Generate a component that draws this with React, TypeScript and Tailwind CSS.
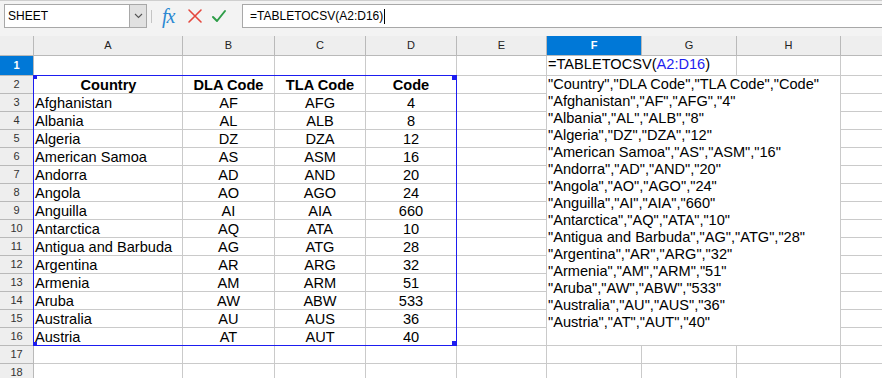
import React from "react";

const data: string[][] = [
  ["Afghanistan", "AF", "AFG", "4"],
  ["Albania", "AL", "ALB", "8"],
  ["Algeria", "DZ", "DZA", "12"],
  ["American Samoa", "AS", "ASM", "16"],
  ["Andorra", "AD", "AND", "20"],
  ["Angola", "AO", "AGO", "24"],
  ["Anguilla", "AI", "AIA", "660"],
  ["Antarctica", "AQ", "ATA", "10"],
  ["Antigua and Barbuda", "AG", "ATG", "28"],
  ["Argentina", "AR", "ARG", "32"],
  ["Armenia", "AM", "ARM", "51"],
  ["Aruba", "AW", "ABW", "533"],
  ["Australia", "AU", "AUS", "36"],
  ["Austria", "AT", "AUT", "40"],
];

const header = ["Country", "DLA Code", "TLA Code", "Code"];
// last column is scrolled mostly out of view, its letter isn't visible
const columns = ["A", "B", "C", "D", "E", "F", "G", "H", ""];

const csvLines = [header, ...data].map((r) =>
  r.map((v) => `"${v}"`).join(","),
);

const cell = "border-r border-b border-[#cacaca] leading-[18px] whitespace-nowrap";
const rowHead =
  "border-r border-b border-[#b9b9b9] bg-[#eeeeee] text-[11px] text-[#333] flex items-center justify-center";

function Toolbar() {
  return (
    <div className="h-[36px] bg-[#f3f3f3] border-t border-[#cfcfcf] flex items-start pt-[3px] pl-[4px] overflow-hidden">
      <div className="w-[143px] h-[24px] border border-[#a8a8a8] bg-white flex shrink-0">
        <span className="pl-[3px] text-[12px] leading-[22px] text-black">SHEET</span>
        <div className="ml-auto w-[17px] h-full bg-[#e1e1e1] border-l border-[#a8a8a8] flex items-center justify-center">
          <svg width="9" height="6" viewBox="0 0 9 6">
            <path d="M1 1 L4.5 4.5 L8 1" fill="none" stroke="#555" strokeWidth="1.1" />
          </svg>
        </div>
      </div>
      <div className="ml-[4px] mt-[6px] w-px h-[13px] bg-[#c4c4c4] shrink-0" />
      <div className="ml-[10px] mt-[1px] w-[17px] h-[22px] shrink-0 font-['Liberation_Serif',serif] italic text-[20px] leading-[22px] text-[#2a88d2] tracking-[-1px]">
        fx
      </div>
      <svg className="ml-[8px] mt-[4px] shrink-0" width="16" height="16" viewBox="0 0 16 16">
        <path d="M2 2 L14 14 M14 2 L2 14" stroke="#e5473d" strokeWidth="1.6" strokeLinecap="round" />
      </svg>
      <svg className="ml-[8px] mt-[4px] shrink-0" width="16" height="16" viewBox="0 0 16 16">
        <path d="M2 9 L6 13 L14 3" fill="none" stroke="#2e9d48" strokeWidth="2" strokeLinecap="round" strokeLinejoin="round" />
      </svg>
      <div className="ml-[15px] w-[660px] h-[24px] border border-[#a8a8a8] bg-white shrink-0 flex items-center pl-[7px]">
        <span className="text-[12px] text-black leading-[22px]">=TABLETOCSV(A2:D16)</span>
        <span className="ml-[1px] w-px h-[15px] bg-black" />
      </div>
    </div>
  );
}

function Sheet() {
  return (
    <div className="relative">
      <div className="grid grid-cols-[34px_149px_92px_91px_91px_90px_95px_95px_104px_130px] grid-rows-[20px_20px_repeat(17,18px)] text-[14.6px] text-black">
        {/* corner + column headers */}
        <div className="border-r border-b border-[#b9b9b9] bg-[#eeeeee]" />
        {columns.map((c, i) => (
          <div
            key={i}
            className={
              c === "F"
                ? "border-r border-b border-[#b9b9b9] bg-[#0078d7] text-white text-[11px] font-bold flex items-center justify-center"
                : "border-r border-b border-[#b9b9b9] bg-[#eeeeee] text-[#222] text-[11px] flex items-center justify-center"
            }
          >
            {c}
          </div>
        ))}

        {/* row 1 */}
        <div className="border-r border-b border-[#b9b9b9] bg-[#0078d7] text-white text-[11px] font-bold flex items-center justify-center">
          1
        </div>
        <div className={cell} />
        <div className={cell} />
        <div className={cell} />
        <div className={cell} />
        <div className={cell} />
        <div className="border-b border-[#cacaca] leading-[17px] whitespace-nowrap pl-px relative z-10">
          =TABLETOCSV(<span className="text-[#1d1df0]">A2:D16</span>)
        </div>
        <div className={cell} />
        <div className={cell} />
        <div className={cell} />

        {/* merged F2:H16 */}
        <div className="col-start-7 col-span-3 row-start-3 row-span-15 border-r border-b border-[#cacaca] pl-px leading-[17px] whitespace-nowrap">
          {csvLines.map((l, i) => (
            <div key={i}>{l}</div>
          ))}
        </div>

        {/* rows 2..16 */}
        {[header, ...data].map((r, i) => (
          <React.Fragment key={i}>
            <div className={rowHead}>{i + 2}</div>
            <div className={`${cell} pl-px ${i === 0 ? "font-bold text-center" : ""}`}>{r[0]}</div>
            <div className={`${cell} text-center ${i === 0 ? "font-bold" : ""}`}>{r[1]}</div>
            <div className={`${cell} text-center ${i === 0 ? "font-bold" : ""}`}>{r[2]}</div>
            <div className={`${cell} text-center ${i === 0 ? "font-bold" : ""}`}>{r[3]}</div>
            <div className={cell} />
            <div className={cell} />
          </React.Fragment>
        ))}

        {/* rows 17, 18 */}
        {[17, 18].map((n) => (
          <React.Fragment key={n}>
            <div className={rowHead}>{n}</div>
            {columns.map((_, i) => (
              <div key={i} className={cell} />
            ))}
          </React.Fragment>
        ))}
      </div>

      {/* reference highlight A2:D16 */}
      <div className="absolute left-[33px] top-[39px] w-[424px] h-[271px] border border-[#1d1df0] pointer-events-none">
        <div className="absolute left-0 top-0 w-[3px] h-[3px] bg-[#1d1df0]" />
        <div className="absolute -right-px -top-px w-[5px] h-[5px] bg-[#1d1df0]" />
        <div className="absolute left-0 bottom-0 w-[3px] h-[3px] bg-[#1d1df0]" />
        <div className="absolute -right-px -bottom-px w-[5px] h-[5px] bg-[#1d1df0]" />
      </div>
    </div>
  );
}

export default function App() {
  return (
    <div className="w-[882px] h-[378px] overflow-hidden bg-white font-['Liberation_Sans',Arial,sans-serif]">
      <Toolbar />
      <Sheet />
    </div>
  );
}
